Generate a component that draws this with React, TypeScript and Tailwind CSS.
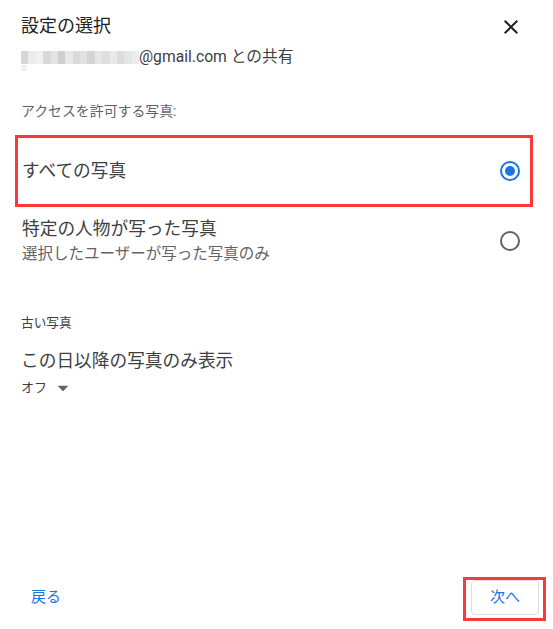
import { useState } from "react";

// pixelated stand-in for the blurred address
const BLUR: string[] = [
  "#d6d6d6", "#ececec", "#f0f0f0", "#d9d9d9", "#e4e4e4", "#cfcfcf", "#e8e8e8",
  "#dadada", "#e2e2e2", "#d4d4d4", "#e6e6e6", "#dedede", "#e9e9e9", "#dcdcdc",
  "#e5e5e5", "#ececec",
];

const Radio = ({ checked }: { checked: boolean }) => (
  <span
    className={
      checked
        ? "w-[20px] h-[20px] rounded-full border-2 border-[#1a73e8] flex items-center justify-center shrink-0"
        : "w-[20px] h-[20px] rounded-full border-2 border-[#5f6368] flex items-center justify-center shrink-0"
    }
  >
    {checked && <span className="w-[10px] h-[10px] rounded-full bg-[#1a73e8]" />}
  </span>
);

export default function App() {
  const [choice, setChoice] = useState<string>("all");

  return (
    <div className="w-[553px] h-[629px] bg-white flex flex-col font-[Roboto,'Noto_Sans_CJK_JP',sans-serif]">
      <header className="pl-[21px] pr-[30px] pt-[14px]">
        <div className="flex justify-between items-start">
          <h1 className="text-[18px] leading-[24px] text-[#202124]">設定の選択</h1>
          <button className="mt-[1px] text-[#202124]">
            <svg width="24" height="24" viewBox="0 0 24 24">
              <path
                d="M19 6.41L17.59 5 12 10.59 6.41 5 5 6.41 10.59 12 5 17.59 6.41 19 12 13.41 17.59 19 19 17.59 13.41 12z"
                fill="currentColor"
              />
            </svg>
          </button>
        </div>
        <div className="mt-[8px] flex items-center text-[15.7px] leading-[20px] text-[#3c4043]">
          <span className="relative flex w-[118px] h-[13px] mt-[1px]">
            {BLUR.map((c, i) => (
              <span key={i} className="flex-1 h-full" style={{ background: c }} />
            ))}
            <span className="absolute left-0 top-[14px] w-[6px] h-[6px] bg-[#f1f1f1]" />
          </span>
          <span>@gmail.com との共有</span>
        </div>
      </header>

      <p className="mt-[35px] pl-[21px] text-[13.9px] leading-[18px] text-[#5f6368]">
        アクセスを許可する写真:
      </p>

      <div
        className="mt-[15px] ml-[15px] mr-[20px] h-[72px] border-[3px] border-[#fa3a3a] flex items-center justify-between pl-[4px] pr-[10px] cursor-pointer"
        onClick={() => setChoice("all")}
      >
        <span className="text-[17.7px] leading-[22px] text-[#3c4043]">すべての写真</span>
        <Radio checked={choice === "all"} />
      </div>

      <div
        className="pt-[11px] pl-[22px] pr-[33px] flex items-center justify-between cursor-pointer"
        onClick={() => setChoice("people")}
      >
        <div className="flex flex-col">
          <span className="text-[17.7px] leading-[22px] text-[#3c4043]">特定の人物が写った写真</span>
          <span className="mt-[4px] text-[15.5px] leading-[20px] text-[#5f6368]">
            選択したユーザーが写った写真のみ
          </span>
        </div>
        <Radio checked={choice === "people"} />
      </div>

      <p className="mt-[51px] pl-[21px] text-[12.7px] leading-[16px] text-[#3c4043]">古い写真</p>
      <p className="mt-[19px] pl-[21px] text-[17.7px] leading-[22px] text-[#3c4043]">
        この日以降の写真のみ表示
      </p>
      <div className="mt-[7px] pl-[21px] flex items-center text-[13px] leading-[18px] text-[#3c4043]">
        <span>オフ</span>
        <svg width="26" height="26" viewBox="0 0 24 24" className="ml-[3px] -my-[4px] text-[#5f6368]">
          <path d="M7 10l5 5 5-5z" fill="currentColor" />
        </svg>
      </div>

      <footer className="mt-auto pl-[31px] pr-[7px] pb-[8px] flex items-center justify-between">
        <button className="mb-[4px] text-[15px] leading-[20px] text-[#1a73e8]">戻る</button>
        <div className="border-[3px] border-[#fa3a3a] pl-[5px] pr-[4px] pb-[3px]">
          <button className="w-[68px] h-[35px] rounded-[4px] border border-[#dadce0] text-[15px] text-[#1a73e8]">
            次へ
          </button>
        </div>
      </footer>
    </div>
  );
}
